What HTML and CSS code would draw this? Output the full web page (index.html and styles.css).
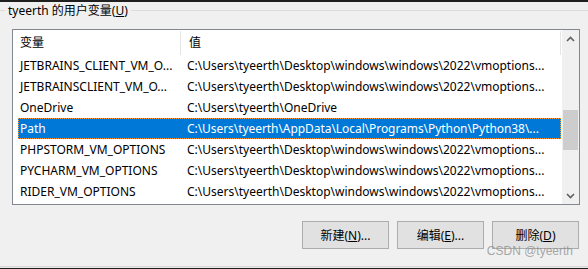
FILE: index.html
```html
<!DOCTYPE html>
<html lang="zh-CN">
  <head>
    <meta charset="UTF-8" />
    <title>用户变量</title>
    <link rel="stylesheet" href="styles.css">
  </head>
  <body>
    <div class="topbar"></div>
    <div class="group-title"><span>tyeerth 的用户变量(<u>U</u>)</span></div>
    <div class="listbox">
      <div class="list">
        <div class="header">
          <div class="hcell name">变量</div>
          <div class="hcell value">值</div>
        </div>
        <div class="row"><span class="name">JETBRAINS_CLIENT_VM_O...</span><span class="value">C:\Users\tyeerth\Desktop\windows\windows\2022\vmoptions...</span></div>
        <div class="row"><span class="name">JETBRAINSCLIENT_VM_O...</span><span class="value">C:\Users\tyeerth\Desktop\windows\windows\2022\vmoptions...</span></div>
        <div class="row"><span class="name">OneDrive</span><span class="value">C:\Users\tyeerth\OneDrive</span></div>
        <div class="row selected"><span class="name">Path</span><span class="value tight">C:\Users\tyeerth\AppData\Local\Programs\Python\Python38\...</span></div>
        <div class="row"><span class="name">PHPSTORM_VM_OPTIONS</span><span class="value">C:\Users\tyeerth\Desktop\windows\windows\2022\vmoptions...</span></div>
        <div class="row"><span class="name">PYCHARM_VM_OPTIONS</span><span class="value">C:\Users\tyeerth\Desktop\windows\windows\2022\vmoptions...</span></div>
        <div class="row"><span class="name">RIDER_VM_OPTIONS</span><span class="value">C:\Users\tyeerth\Desktop\windows\windows\2022\vmoptions...</span></div>
      </div>
      <div class="scrollbar">
        <div class="sb-btn">
          <svg width="9" height="6" viewBox="0 0 9 6"><path d="M1 5 L4.5 1.5 L8 5" fill="none" stroke="#606060" stroke-width="1.6"/></svg>
        </div>
        <div class="sb-track"><div class="sb-thumb"></div></div>
        <div class="sb-btn">
          <svg width="9" height="6" viewBox="0 0 9 6"><path d="M1 1 L4.5 4.5 L8 1" fill="none" stroke="#606060" stroke-width="1.6"/></svg>
        </div>
      </div>
    </div>
    <div class="buttons">
      <button class="btn">新建(<u>N</u>)...</button>
      <button class="btn">编辑(<u>E</u>)...</button>
      <button class="btn">删除(<u>D</u>)</button>
      <div class="watermark">CSDN @tyeerth</div>
    </div>
    <div class="bottombar"></div>
  </body>
</html>
```

FILE: styles.css
```css
html,
body {
  margin: 0;
  height: 100%;
}

body {
  font-family: 'Noto Sans', 'Noto Sans CJK SC', sans-serif;
  font-size: 12px;
  color: #000;
  background: #f0f0f0;
  display: flex;
  flex-direction: column;
  overflow: hidden;
}

.topbar {
  height: 2px;
  background: #1f1f1f;
}

/* titulek skupiny s linkou */
.group-title {
  display: flex;
  align-items: center;
  height: 17px;
  line-height: 17px;
}

.group-title::before,
.group-title::after {
  content: "";
  height: 1px;
  background: #dcdcdc;
}

.group-title::before {
  width: 5px;
}

.group-title::after {
  flex: 1;
}

.group-title span {
  padding: 0 3px;
  white-space: nowrap;
}

.listbox {
  display: flex;
  margin: 10px 8px 0 12px;
  height: 174px;
  border: 1px solid #828790;
  background: #fff;
  overflow: hidden;
}

.list {
  flex: 1;
  min-width: 0;
}

.header {
  display: flex;
  height: 25px;
  align-items: center;
}

.hcell {
  white-space: nowrap;
}

.hcell.name {
  width: 168px;
  padding-left: 7px;
  height: 24px;
  line-height: 24px;
  border-right: 1px solid #e5e5e5;
  box-sizing: border-box;
}

.hcell.value {
  padding-left: 8px;
  flex: 1;
  height: 24px;
  line-height: 24px;
  border-right: 1px solid #e5e5e5;
}

.row {
  display: flex;
  height: 21px;
  line-height: 21px;
  margin-left: 5px;
  white-space: nowrap;
  box-sizing: border-box;
  overflow: hidden;
}

.row .name {
  flex: none;
  width: 169px;
  padding-left: 2px;
  box-sizing: border-box;
  overflow: hidden;
}

.row .value {
  flex: none;
}

.row .value.tight {
  letter-spacing: -0.06px;
}

.row.selected {
  background: #0078d7;
  color: #fff;
  outline: 1px dotted #ff9c3a;
  outline-offset: -1px;
}

.scrollbar {
  width: 17px;
  display: flex;
  flex-direction: column;
  background: #f0f0f0;
  border-left: 1px solid #fff;
}

.sb-btn {
  height: 17px;
  display: flex;
  align-items: center;
  justify-content: center;
}

.sb-track {
  flex: 1;
  padding: 0 1px;
}

.sb-thumb {
  margin-top: 63px;
  height: 40px;
  background: #cdcdcd;
}

.buttons {
  position: relative;
  display: flex;
  justify-content: flex-end;
  gap: 8px;
  margin: 16px 9px 0 0;
}

.btn {
  width: 87px;
  height: 28px;
  padding: 0;
  font-family: inherit;
  font-size: 12px;
  color: #000;
  background: #e1e1e1;
  border: 1px solid #adadad;
}

.watermark {
  position: absolute;
  right: 6px;
  top: 23px;
  font-family: 'Liberation Sans', sans-serif;
  font-size: 12px;
  color: rgba(140, 140, 140, 0.75);
  pointer-events: none;
}

.bottombar {
  margin-top: auto;
  border-top: 1px solid #d9d9d9;
  height: 1px;
  background: #e8e8e8;
  border-bottom: 1px solid #1f1f1f;
}
```
